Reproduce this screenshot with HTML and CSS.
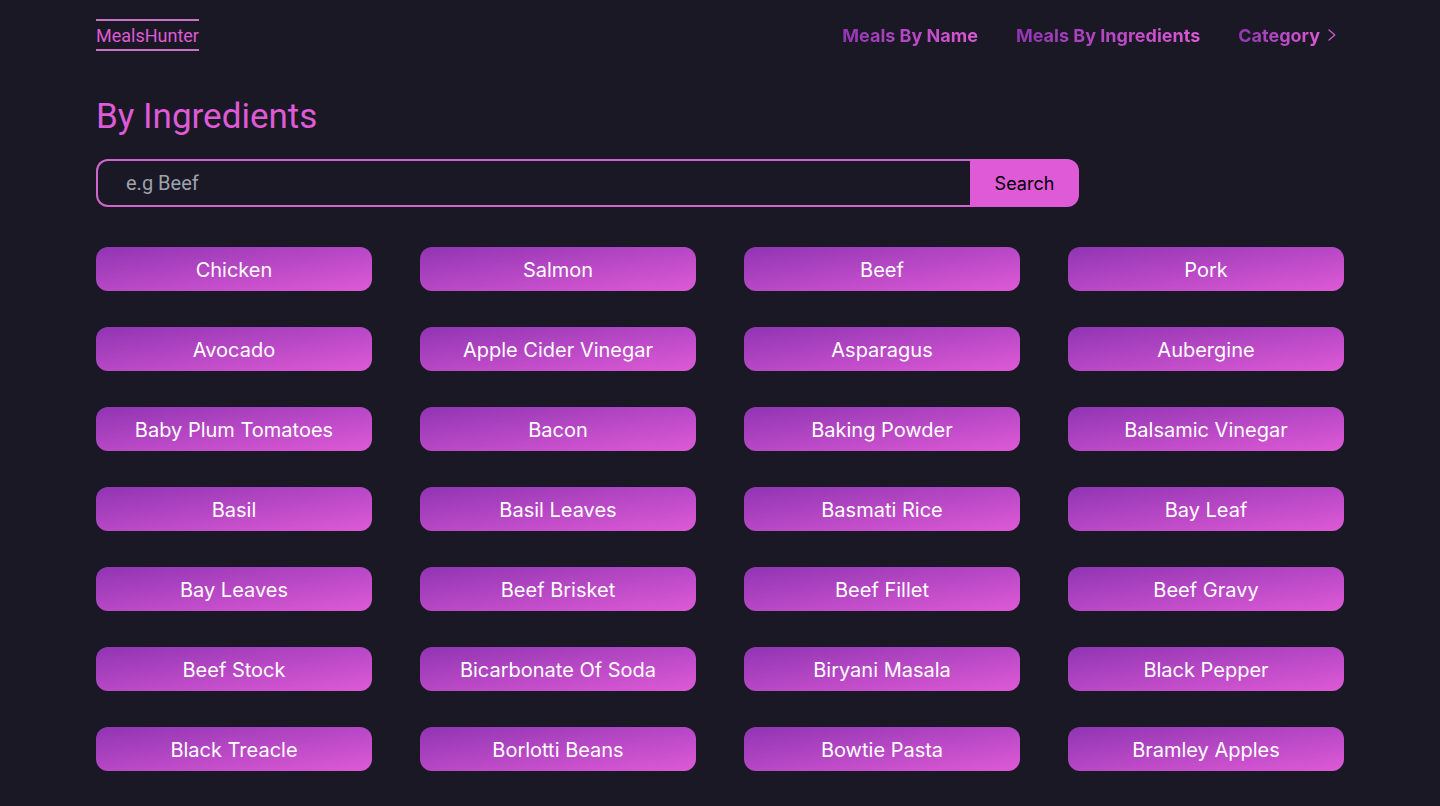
FILE: index.html
```
<!DOCTYPE html>
<html lang="en">
<head>
<meta charset="utf-8">
<meta name="viewport" content="width=device-width, initial-scale=1">
<title>MealsHunter</title>
<link rel="stylesheet" href="styles.css">
</head>
<body>
<header class="site-header">
  <a class="logo" href="#">MealsHunter</a>
  <nav class="nav">
    <a class="nav-link" href="#">Meals By Name</a>
    <a class="nav-link" href="#">Meals By Ingredients</a>
    <button class="nav-toggle" type="button">
      <span class="nav-link">Category</span>
      <svg class="chevron" viewBox="0 0 8 12" aria-hidden="true"><path d="M1 1 L6.8 6 L1 11"/></svg>
    </button>
  </nav>
</header>
<main class="content">
  <h1 class="title">By Ingredients</h1>
  <form class="search">
    <input class="search-input" type="text" placeholder="e.g Beef" aria-label="Ingredient">
    <button class="search-button" type="submit">Search</button>
  </form>
  <div class="ingredients">
    <a class="ingredient" href="#">Chicken</a>
    <a class="ingredient" href="#">Salmon</a>
    <a class="ingredient" href="#">Beef</a>
    <a class="ingredient" href="#">Pork</a>
    <a class="ingredient" href="#">Avocado</a>
    <a class="ingredient" href="#">Apple Cider Vinegar</a>
    <a class="ingredient" href="#">Asparagus</a>
    <a class="ingredient" href="#">Aubergine</a>
    <a class="ingredient" href="#">Baby Plum Tomatoes</a>
    <a class="ingredient" href="#">Bacon</a>
    <a class="ingredient" href="#">Baking Powder</a>
    <a class="ingredient" href="#">Balsamic Vinegar</a>
    <a class="ingredient" href="#">Basil</a>
    <a class="ingredient" href="#">Basil Leaves</a>
    <a class="ingredient" href="#">Basmati Rice</a>
    <a class="ingredient" href="#">Bay Leaf</a>
    <a class="ingredient" href="#">Bay Leaves</a>
    <a class="ingredient" href="#">Beef Brisket</a>
    <a class="ingredient" href="#">Beef Fillet</a>
    <a class="ingredient" href="#">Beef Gravy</a>
    <a class="ingredient" href="#">Beef Stock</a>
    <a class="ingredient" href="#">Bicarbonate Of Soda</a>
    <a class="ingredient" href="#">Biryani Masala</a>
    <a class="ingredient" href="#">Black Pepper</a>
    <a class="ingredient" href="#">Black Treacle</a>
    <a class="ingredient" href="#">Borlotti Beans</a>
    <a class="ingredient" href="#">Bowtie Pasta</a>
    <a class="ingredient" href="#">Bramley Apples</a>
  </div>
</main>
</body>
</html>
```

FILE: styles.css
```
:root {
  --bg: #1a1824;
  --pink: #de5ad6;
  --purple: #9035b3;
  --font-body: Inter, "Liberation Sans", sans-serif;
  --font-narrow: Roboto, "Liberation Sans", sans-serif;
}

* {
  box-sizing: border-box;
}

body {
  margin: 0;
  background: var(--bg);
  color: #fff;
  font-family: var(--font-body);
}

a {
  text-decoration: none;
}

button,
input {
  font-family: inherit;
}

.site-header {
  display: flex;
  align-items: center;
  justify-content: space-between;
  padding: 19px 104px 19px 96px;
}

.logo {
  padding: 3px 0 1px;
  border-top: 2px solid #c774c6;
  border-bottom: 2px solid #c774c6;
  color: var(--pink);
  font-family: var(--font-narrow);
  font-size: 18px;
  line-height: 24px;
}

.nav {
  display: flex;
  align-items: center;
  gap: 38px;
}

.nav-link {
  padding-top: 2px;
  background: linear-gradient(100deg, var(--purple), var(--pink));
  background-clip: text;
  -webkit-background-clip: text;
  color: transparent;
  font-size: 18px;
  font-weight: 700;
  line-height: 28px;
}

.nav-toggle {
  display: flex;
  align-items: center;
  gap: 8px;
  padding: 0;
  border: 0;
  background: none;
  cursor: pointer;
}

.chevron {
  width: 8px;
  height: 12px;
  fill: none;
  stroke: #c95bc9;
  stroke-width: 1.3;
  stroke-linecap: round;
  stroke-linejoin: round;
}

.content {
  padding: 27px 96px 35px;
}

.title {
  margin: 0;
  color: var(--pink);
  font-family: var(--font-narrow);
  font-size: 35px;
  font-weight: 400;
  line-height: 40px;
}

.search {
  display: flex;
  margin: 22px 0 40px;
}

.search-input {
  width: 70%;
  padding: 8px 28px;
  border: 2px solid #cf66ce;
  border-right: 0;
  border-radius: 12px 0 0 12px;
  background: transparent;
  color: #fff;
  font-family: var(--font-narrow);
  font-size: 20px;
  line-height: 28px;
}

.search-input::placeholder {
  color: #9ca3af;
  opacity: 1;
}

.search-button {
  padding: 11px 25px 9px;
  border: 0;
  border-radius: 0 12px 12px 0;
  background: var(--pink);
  color: #000;
  font-size: 18px;
  line-height: 28px;
  cursor: pointer;
}

.ingredients {
  display: grid;
  grid-template-columns: repeat(4, 1fr);
  gap: 36px 48px;
}

.ingredient {
  padding: 9px 8px 7px;
  border-radius: 12px;
  background: linear-gradient(to bottom right, var(--purple), var(--pink));
  color: #fff;
  font-size: 20px;
  line-height: 28px;
  text-align: center;
}
```
